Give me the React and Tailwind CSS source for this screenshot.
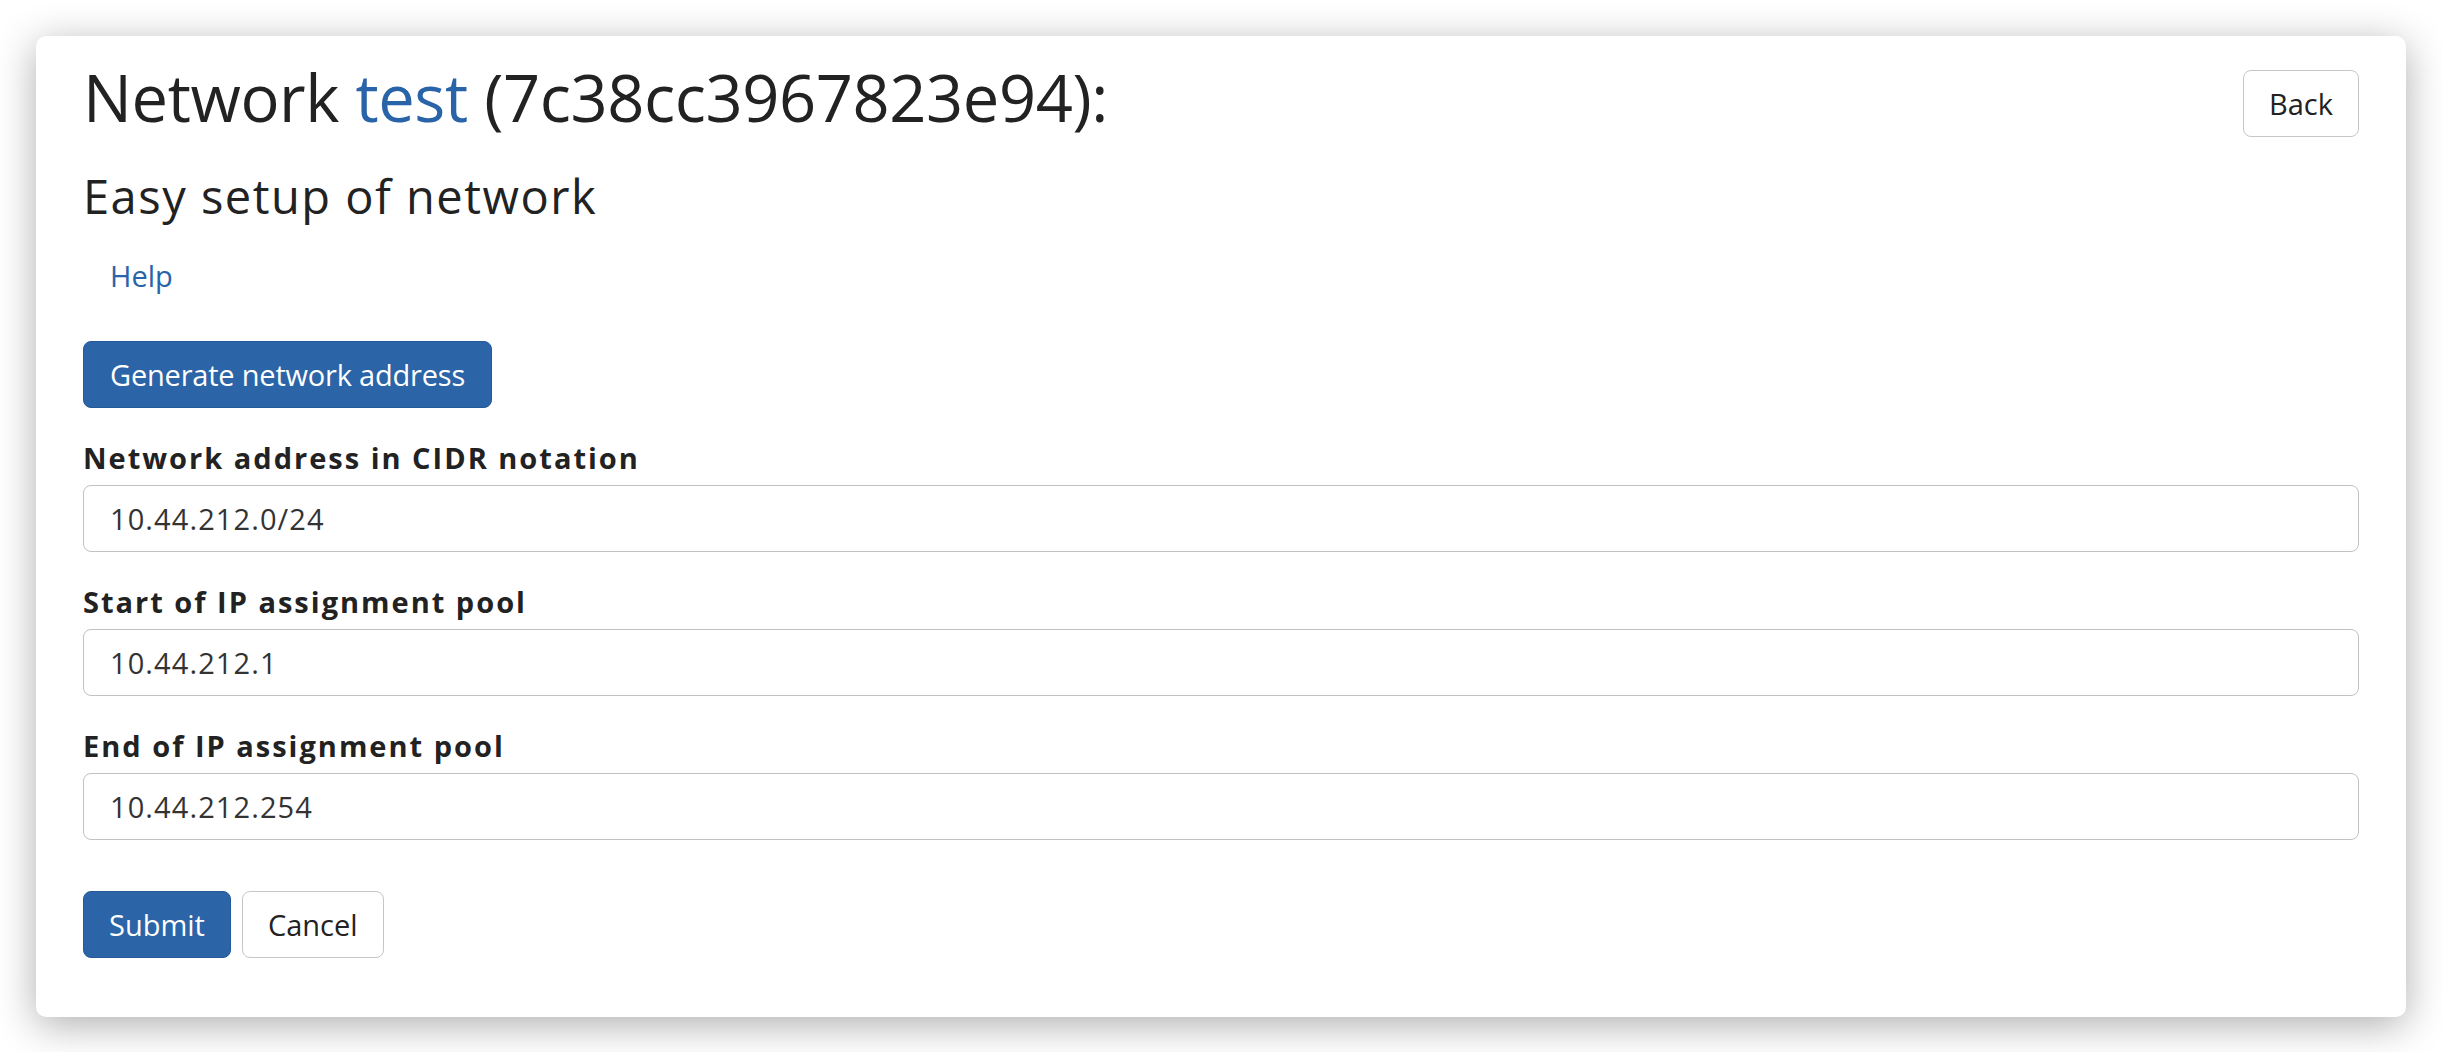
import { useState } from 'react'

const FIELDS = [
  { id: 'cidr', label: 'Network address in CIDR notation', value: '10.44.212.0/24' },
  { id: 'start', label: 'Start of IP assignment pool', value: '10.44.212.1' },
  { id: 'end', label: 'End of IP assignment pool', value: '10.44.212.254' },
]

export default function App() {
  const [values, setValues] = useState(
    Object.fromEntries(FIELDS.map(f => [f.id, f.value]))
  )

  return (
    <div
      className="min-h-screen bg-white p-[36px] text-[#222]"
      style={{ fontFamily: '"Open Sans", "Noto Sans", sans-serif' }}
    >
      <div className="bg-white rounded-[10px] shadow-[0_8px_40px_rgba(0,0,0,0.32)] px-[47px] pt-[22px] pb-[59px]">
        <div className="flex items-start justify-between">
          <h1 className="text-[65px] leading-[78px] font-normal tracking-[-0.4px]">
            Network <a href="#" className="text-[#2a64a8]">test</a> (7c38cc3967823e94):
          </h1>
          <button className="mt-[12px] h-[67px] px-[25px] bg-white border border-[#c6c6c6] rounded-[8px] text-[29px]">
            Back
          </button>
        </div>

        <h2 className="mt-[31px] text-[47px] leading-[56px] font-normal tracking-[1.5px]">Easy setup of network</h2>

        <div className="mt-[18px]">
          <button className="h-[67px] px-[26px] border border-transparent text-[29px] text-[#2a64a8]">
            Help
          </button>
        </div>

        <div className="mt-[32px]">
          <button className="h-[67px] px-[26px] bg-[#2b64a7] border border-[#245a98] rounded-[8px] text-white text-[29px] tracking-[-0.2px]">
            Generate network address
          </button>
        </div>

        <div className="mt-[28px] flex flex-col gap-[28px]">
          {FIELDS.map(field => (
            <div key={field.id}>
              <label htmlFor={field.id} className="block text-[29px] leading-[44px] font-bold tracking-[2px] mb-[5px]">
                {field.label}
              </label>
              <input
                id={field.id}
                type="text"
                value={values[field.id]}
                onChange={(e) => setValues(prev => ({ ...prev, [field.id]: e.target.value }))}
                className="block w-full h-[67px] px-[26px] border border-[#c2c2c2] rounded-[8px] text-[29px] tracking-[1.1px] text-[#333] focus:outline-none"
              />
            </div>
          ))}
        </div>

        <div className="mt-[51px] flex gap-[11px]">
          <button className="h-[67px] px-[25px] bg-[#2b64a7] border border-[#245a98] rounded-[8px] text-white text-[29px]">
            Submit
          </button>
          <button className="h-[67px] px-[25px] bg-white border border-[#c6c6c6] rounded-[8px] text-[29px]">
            Cancel
          </button>
        </div>
      </div>
    </div>
  )
}
